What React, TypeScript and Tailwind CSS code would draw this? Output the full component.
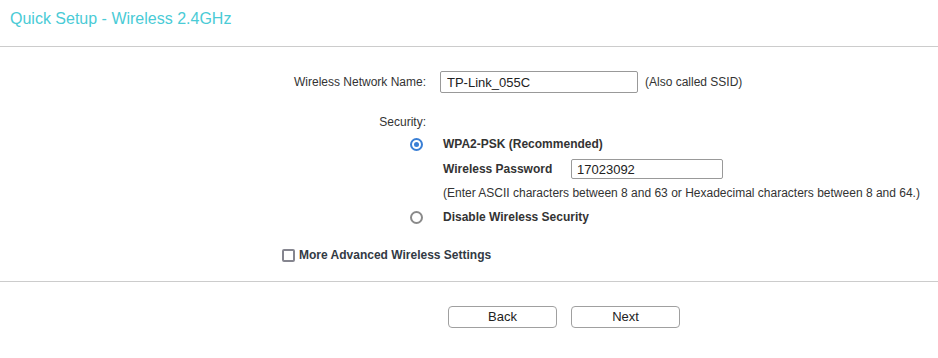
import { useState } from "react";

const font = { fontFamily: '"Liberation Sans", Arial, sans-serif' };

const Radio = ({ checked, onClick }: { checked: boolean; onClick: () => void }) => (
  <span
    onClick={onClick}
    className={`flex h-[13px] w-[13px] shrink-0 cursor-pointer items-center justify-center rounded-full border-2 ${
      checked ? "border-[#3a7fd5]" : "border-[#8a8a8a]"
    }`}
  >
    {checked && <span className="h-[5px] w-[5px] rounded-full bg-[#3a7fd5]" />}
  </span>
);

const App = () => {
  const [ssid, setSsid] = useState("TP-Link_055C");
  const [password, setPassword] = useState("17023092");
  const [security, setSecurity] = useState("wpa2");
  const [advanced, setAdvanced] = useState(false);

  return (
    <div className="min-h-[358px] w-[938px] bg-white text-[12px] leading-[14px] text-[#333]" style={font}>
      <div className="h-[47px] border-b border-[#cccccc] pl-[10px] pt-[10px]">
        <h1 className="text-[16px] leading-[18px] text-[#4acbd6]">Quick Setup - Wireless 2.4GHz</h1>
      </div>

      <div className="mt-[24px] flex h-[22px] items-center">
        <label className="w-[426px] text-right">Wireless Network Name:</label>
        <input
          value={ssid}
          onChange={(e) => setSsid(e.target.value)}
          className="ml-[14px] h-[22px] w-[198px] rounded-[2px] border border-[#999] px-[6px] text-[13px] text-[#222] outline-none"
        />
        <span className="ml-[7px]">(Also called SSID)</span>
      </div>

      <div className="mt-[22px] w-[426px] text-right">Security:</div>

      <div className="mt-[8px] flex h-[14px] items-center pl-[410px]">
        <Radio checked={security === "wpa2"} onClick={() => setSecurity("wpa2")} />
        <span className="ml-[20px] font-bold">WPA2-PSK (Recommended)</span>
      </div>

      <div className="mt-[8px] flex h-[20px] items-center pl-[443px]">
        <span className="w-[128px] font-bold">Wireless Password</span>
        <input
          value={password}
          onChange={(e) => setPassword(e.target.value)}
          className="h-[20px] w-[152px] rounded-[2px] border border-[#999] px-[5px] text-[13px] text-[#222] outline-none"
        />
      </div>

      <div className="mt-[7px] pl-[443px]">
        (Enter ASCII characters between 8 and 63 or Hexadecimal characters between 8 and 64.)
      </div>

      <div className="mt-[10px] flex h-[14px] items-center pl-[410px]">
        <Radio checked={security === "none"} onClick={() => setSecurity("none")} />
        <span className="ml-[20px] font-bold">Disable Wireless Security</span>
      </div>

      <div className="mt-[24px] flex h-[14px] items-center pl-[282px]">
        <span
          onClick={() => setAdvanced(!advanced)}
          className="flex h-[13px] w-[13px] cursor-pointer items-center justify-center rounded-[2px] border-2 border-[#85858f]"
        >
          {advanced && <span className="h-[5px] w-[5px] bg-[#3a7fd5]" />}
        </span>
        <span className="ml-[4px] font-bold text-[#333a44]">More Advanced Wireless Settings</span>
      </div>

      <div className="mt-[19px] border-t border-[#cccccc]" />

      <div className="mt-[24px] flex gap-[14px] pl-[448px]">
        <button className="h-[22px] w-[109px] rounded-[4px] border border-[#a0a0a0] bg-white text-[13px] text-[#222]">
          Back
        </button>
        <button className="h-[22px] w-[109px] rounded-[4px] border border-[#a0a0a0] bg-white text-[13px] text-[#222]">
          Next
        </button>
      </div>
    </div>
  );
};

export default App;
